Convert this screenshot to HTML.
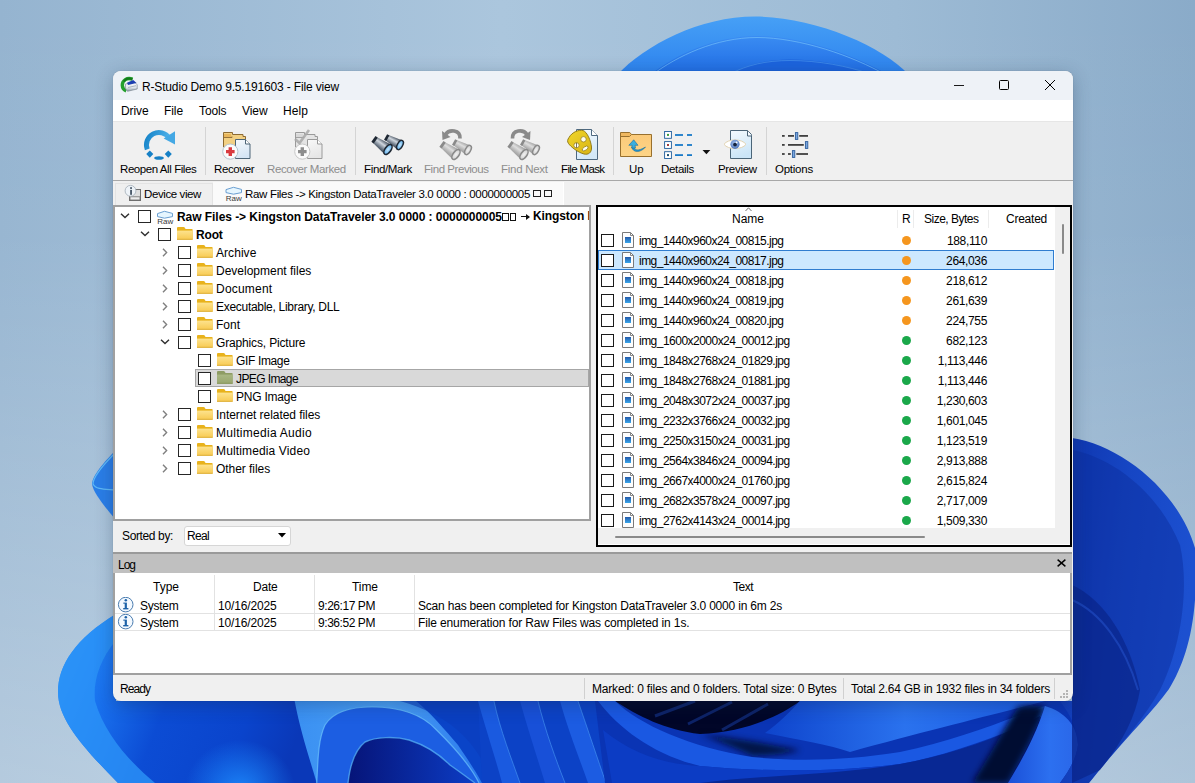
<!DOCTYPE html>
<html><head><meta charset="utf-8"><style>
html,body{margin:0;padding:0;width:1195px;height:783px;overflow:hidden;}
body{position:relative;font-family:'Liberation Sans', sans-serif;}
div{font-family:'Liberation Sans', sans-serif;}
</style></head><body>
<svg style="position:absolute;left:0;top:0" width="1195" height="783" viewBox="0 0 1195 783">
<defs>
<linearGradient id="sky" x1="0" y1="0" x2="1" y2="0">
<stop offset="0" stop-color="#95b4d0"/><stop offset="0.42" stop-color="#abc6dd"/><stop offset="0.75" stop-color="#9dbbd5"/><stop offset="1" stop-color="#8aabc9"/>
</linearGradient>
<linearGradient id="skyv" x1="0" y1="0" x2="0" y2="1">
<stop offset="0" stop-color="#ffffff" stop-opacity="0"/><stop offset="0.3" stop-color="#ffffff" stop-opacity="0.03"/><stop offset="1" stop-color="#ffffff" stop-opacity="0.3"/>
</linearGradient>
<linearGradient id="arc1" x1="0" y1="0" x2="0" y2="1"><stop offset="0" stop-color="#46a0f6"/><stop offset="1" stop-color="#2d82ee"/></linearGradient>
<linearGradient id="arc2" x1="0" y1="0" x2="0" y2="1"><stop offset="0" stop-color="#3a8cf2"/><stop offset="1" stop-color="#1f6ce4"/></linearGradient>
<linearGradient id="lp" x1="0" y1="0" x2="1" y2="0.25">
<stop offset="0" stop-color="#2e9af8"/><stop offset="0.25" stop-color="#1a74f0"/><stop offset="0.5" stop-color="#0c4cd4"/><stop offset="0.8" stop-color="#0a44cc"/><stop offset="1" stop-color="#0a38b8"/>
</linearGradient>
<linearGradient id="rp" x1="0" y1="0" x2="1" y2="0.3"><stop offset="0" stop-color="#0e34ac"/><stop offset="0.5" stop-color="#1646c4"/><stop offset="1" stop-color="#1c50d0"/></linearGradient>
<linearGradient id="rib" x1="0" y1="0" x2="1" y2="0"><stop offset="0" stop-color="#3a90f2"/><stop offset="0.5" stop-color="#4aa0f6"/><stop offset="1" stop-color="#2a78ec"/></linearGradient><linearGradient id="inn" x1="0" y1="0" x2="1" y2="0"><stop offset="0" stop-color="#061478"/><stop offset="1" stop-color="#0c3cc4"/></linearGradient>
<linearGradient id="sw" x1="0" y1="0" x2="0" y2="1"><stop offset="0" stop-color="#0a2aa0"/><stop offset="1" stop-color="#1c64ee"/></linearGradient>
<linearGradient id="dkv" x1="0" y1="0" x2="0" y2="1"><stop offset="0" stop-color="#000618"/><stop offset="1" stop-color="#0a2a9a"/></linearGradient>
<linearGradient id="rb2" x1="0" y1="0" x2="1" y2="0"><stop offset="0" stop-color="#1a5ae6"/><stop offset="1" stop-color="#2a76f2"/></linearGradient>
<linearGradient id="ms" x1="0" y1="0" x2="1" y2="0"><stop offset="0" stop-color="#0e44cc"/><stop offset="0.5" stop-color="#2a72ee"/><stop offset="1" stop-color="#1a5ae2"/></linearGradient><linearGradient id="tg" x1="0" y1="0" x2="1" y2="0"><stop offset="0" stop-color="#1a50d8"/><stop offset="0.6" stop-color="#2c70f0"/><stop offset="1" stop-color="#2a66e8"/></linearGradient><filter id="b3" x="-30%" y="-30%" width="160%" height="160%"><feGaussianBlur stdDeviation="3"/></filter>
<radialGradient id="spot" cx="0.5" cy="0.5" r="0.5"><stop offset="0" stop-color="#1c86fa" stop-opacity="0.95"/><stop offset="1" stop-color="#1c86fa" stop-opacity="0"/></radialGradient>
</defs>
<rect width="1195" height="783" fill="url(#sky)"/>
<rect width="1195" height="783" fill="url(#skyv)"/>
<!-- top arc -->
<path d="M617 75 C645 45 700 16.5 755 16.5 C812 16.5 882 45 909 75 Z" fill="url(#arc1)"/>
<path d="M650 75 C675 55 715 36 757 36 C800 36 855 55 888 75 Z" fill="url(#arc2)"/>
<path d="M652 75 C677 56 716 37.5 757 37.5 C800 37.5 853 56 886 75" fill="none" stroke="#7cc8fc" stroke-width="1" opacity="0.6"/>
<path d="M728 75 C745 65 765 59.5 790 59.5 C820 59.5 850 66 872 75 Z" fill="#1c64de"/>
<path d="M730 74 C747 65 766 60.5 790 60.5 C818 60.5 848 66 870 74" fill="none" stroke="#5aa8f4" stroke-width="1" opacity="0.5"/>
<!-- left small petal -->
<path d="M116 450 C104 462 92 476 92 484 C93 492 104 506 116 520 Z" fill="#2a7ee8"/>
<path d="M116 452 C104 464 93 476 93 484 C96 490 106 489 116 490" fill="none" stroke="#6cc8fa" stroke-width="1.2" opacity="0.8"/>
<!-- left big petal + bottom-left body -->
<path d="M116 614 C76 638 58 665 58 692 C58 722 88 752 118 783 L330 783 L295 701 L116 701 Z" fill="url(#lp)"/>
<path d="M116 640 C100 660 93 680 95 701 C105 735 130 762 155 783 L118 783 C88 752 58 722 58 692 C58 665 76 638 116 614 Z" fill="#2c94f8" opacity="0.8"/>
<ellipse cx="240" cy="790" rx="55" ry="50" fill="url(#spot)"/>
<!-- loop ribbons region -->
<path d="M294 701 L480 701 L485 783 L316 783 Z" fill="#0a44c8"/>
<path d="M294.7 701 L416 701 C430 712 445 730 458 745 C468 760 475 770 482 783 L316.8 783 C310 760 300 730 294.7 701 Z" fill="url(#rib)"/>
<path d="M316.8 783 C318 760 318 740 325 725 C333 712 350 707 372 707 C395 707 420 712 436.5 730 C455 748 470 765 479 783 Z" fill="#1c5ee2"/>
<path d="M316.8 783 C318 760 318 740 325 725 C333 712 350 707 372 707 C395 707 420 712 436.5 730 C455 748 470 765 479 783" fill="none" stroke="#7ad4ff" stroke-width="1.2" opacity="0.6"/>
<path d="M348 783 C350 765 355 750 365 742 C375 737 395 736 409 740 C425 745 440 755 450 765 C460 772 468 778 475 783 Z" fill="url(#inn)"/>
<path d="M348 783 C350 765 355 750 365 742 C375 737 395 736 409 740 C425 745 440 755 450 765 C460 772 468 778 475 783" fill="none" stroke="#5ab8f8" stroke-width="1.4" opacity="0.7"/>
<path d="M400 701 L480 701 L482 760 C470 740 450 715 400 701 Z" fill="#0a3cbc" opacity="0.6"/>
<!-- vertical ribbons -->
<path d="M478 701 L600 701 L610 783 L482 783 Z" fill="#0c42c6"/>
<path d="M478 701 C486 730 496 760 502 783 L520 783 C512 760 500 730 494 701 Z" fill="#1a5ae0"/>
<path d="M520 701 C528 730 538 760 545 783 L565 783 C556 760 545 730 538 701 Z" fill="#1850d8"/>
<path d="M560 701 C568 730 580 760 588 783 L606 783 C598 760 588 730 578 701 Z" fill="#1c5ce2"/>
<path d="M494 701 C500 730 512 760 520 783 M538 701 C545 730 556 760 565 783 M578 701 C588 730 598 760 606 783" fill="none" stroke="#4a9af4" stroke-width="1" opacity="0.6"/>
<!-- sweeping region -->
<path d="M595 701 L1080 701 L1080 783 L605 783 Z" fill="#0a34b4"/>
<path d="M615 701 L800 701 C780 716 745 732 700 734 C665 730 638 716 615 701 Z" fill="#010628"/>
<path d="M655 716 L695 701 M688 724 L732 702 M722 730 L768 704" stroke="#1a40a8" stroke-width="3" opacity="0.5"/>
<path d="M800 701 L1045 701 C1000 713 930 730 850 752 C830 745 800 740 765 733 C780 722 790 712 800 701 Z" fill="url(#ms)"/>
<path d="M700 734 C735 738 770 744 800 750 C790 754 770 756 752 756 C735 748 715 740 700 734 Z" fill="#02082a" opacity="0.8" filter="url(#b3)"/>
<path d="M598 701 L615 701 C640 725 690 747 752 757 C800 762 850 760 900 752 C960 740 1010 718 1045 706 L1050 713 C1010 732 950 755 900 764 C840 772 760 772 700 766 C655 755 620 730 598 701 Z" fill="#1a58e2"/>
<path d="M603 730 C630 752 660 764 700 766 C760 772 840 772 900 764 L900 783 L612 783 Z" fill="#0c3cc4"/>
<path d="M700 783 C760 775 840 775 900 764 C950 755 1000 738 1040 716 L1030 783 Z" fill="#082894"/>
<path d="M1018 707 C1026 705 1035 705 1045 706 C1035 735 1020 760 1008 783 L972 783 C990 755 1003 730 1018 707 Z" fill="#020a30" filter="url(#b3)"/>
<path d="M1045 706 C1065 712 1077 725 1078 745 C1076 760 1068 772 1060 783 L1008 783 C1022 760 1036 735 1045 706 Z" fill="url(#tg)"/>
<!-- right petal -->
<path d="M1072 438 C1120 445 1178 490 1195 548 L1195 600 C1192 640 1182 668 1169 689 C1150 715 1125 738 1089 783 L1060 783 C1068 772 1076 760 1078 745 C1077 725 1068 712 1060 701 L1072 701 Z" fill="url(#rp)"/>
<path d="M1072 450 C1115 458 1160 495 1180 545 C1190 590 1180 650 1160 690 C1140 725 1115 750 1089 783 L1072 783 Z" fill="#0c2c9c" opacity="0.45"/>
<path d="M1072 585 C1105 600 1130 640 1140 690 C1135 720 1120 745 1100 770 L1072 783 Z" fill="#081f80" opacity="0.55"/>
<path d="M1072 600 C1100 612 1125 645 1138 690" fill="none" stroke="#2a5ad8" stroke-width="2" opacity="0.45"/>
</svg><div style="position:absolute;left:113px;top:71px;width:960px;height:630px;border-radius:8px;box-shadow:0 4px 18px rgba(20,40,70,0.30)"></div><div style="position:absolute;left:113px;top:71px;width:960px;height:630px;background:#f0f0f0;border-radius:8px;overflow:hidden;box-shadow:0 0 1px rgba(0,0,0,0.3)"></div><div style="position:absolute;left:113px;top:71px;width:960px;height:29px;background:#eef2f7;border-radius:8px 8px 0 0"></div><div style="position:absolute;left:113px;top:100px;width:960px;height:22px;background:#ffffff"></div><div style="position:absolute;left:113px;top:121px;width:960px;height:1px;background:#e6e6e6"></div><div style="position:absolute;left:113px;top:180px;width:960px;height:1px;background:#a8a8a8"></div><div style="position:absolute;left:115px;top:183px;width:98px;height:22px;background:#efefef;border:1px solid #e3e3e3;border-bottom:0;box-sizing:border-box"></div><div style="position:absolute;left:213px;top:182px;width:351px;height:23px;background:#fafafa"></div><div style="position:absolute;left:563px;top:182px;width:1px;height:23px;background:#ffffff"></div><div style="position:absolute;left:113px;top:205px;width:478px;height:316px;background:#ffffff;border:2px solid #a0a0a0;box-sizing:border-box"></div><div style="position:absolute;left:596px;top:205px;width:476px;height:342px;background:#ffffff;border:2px solid #000;box-sizing:border-box"></div><div style="position:absolute;left:113px;top:552px;width:959px;height:2px;background:#9a9a9a"></div><div style="position:absolute;left:113px;top:554px;width:959px;height:19px;background:#c0c0c0"></div><div style="position:absolute;left:113px;top:573px;width:959px;height:102px;background:#ffffff;border:2px solid #a0a0a0;border-top:0;box-sizing:border-box"></div><div style="position:absolute;top:81px;font-size:12px;line-height:12px;color:#000;white-space:nowrap;letter-spacing:-0.160px;left:142px;">R-Studio Demo 9.5.191603 - File view</div><div style="position:absolute;left:954px;top:85px;width:10px;height:1px;background:#1a1a1a"></div><svg style="position:absolute;left:998px;top:79px;" width="12" height="12" viewBox="0 0 12 12"><rect x="1.5" y="1.5" width="9" height="9" rx="1" fill="none" stroke="#000" stroke-width="1"/></svg><svg style="position:absolute;left:1044px;top:79px;" width="12" height="12" viewBox="0 0 12 12"><path d="M1 1 L11 11 M11 1 L1 11" stroke="#000" stroke-width="1"/></svg><div style="position:absolute;top:105px;font-size:12px;line-height:12px;color:#000;white-space:nowrap;letter-spacing:-0.083px;left:121px;">Drive</div><div style="position:absolute;top:105px;font-size:12px;line-height:12px;color:#000;white-space:nowrap;letter-spacing:-0.061px;left:164px;">File</div><div style="position:absolute;top:105px;font-size:12px;line-height:12px;color:#000;white-space:nowrap;letter-spacing:-0.123px;left:199px;">Tools</div><div style="position:absolute;top:105px;font-size:12px;line-height:12px;color:#000;white-space:nowrap;letter-spacing:-0.049px;left:242px;">View</div><div style="position:absolute;top:105px;font-size:12px;line-height:12px;color:#000;white-space:nowrap;letter-spacing:0.103px;left:283px;">Help</div><div style="position:absolute;top:164px;font-size:11.5px;line-height:11.5px;color:#000;white-space:nowrap;letter-spacing:-0.426px;left:120px;">Reopen All Files</div><div style="position:absolute;top:164px;font-size:11.5px;line-height:11.5px;color:#000;white-space:nowrap;letter-spacing:-0.390px;left:214px;">Recover</div><div style="position:absolute;top:164px;font-size:11.5px;line-height:11.5px;color:#8d8d8d;white-space:nowrap;letter-spacing:-0.398px;left:267px;">Recover Marked</div><div style="position:absolute;top:164px;font-size:11.5px;line-height:11.5px;color:#000;white-space:nowrap;letter-spacing:-0.347px;left:364px;">Find/Mark</div><div style="position:absolute;top:164px;font-size:11.5px;line-height:11.5px;color:#8d8d8d;white-space:nowrap;letter-spacing:-0.447px;left:424px;">Find Previous</div><div style="position:absolute;top:164px;font-size:11.5px;line-height:11.5px;color:#8d8d8d;white-space:nowrap;letter-spacing:-0.280px;left:501px;">Find Next</div><div style="position:absolute;top:164px;font-size:11.5px;line-height:11.5px;color:#000;white-space:nowrap;letter-spacing:-0.645px;left:561px;">File Mask</div><div style="position:absolute;top:164px;font-size:11.5px;line-height:11.5px;color:#000;white-space:nowrap;letter-spacing:0.048px;left:629px;">Up</div><div style="position:absolute;top:164px;font-size:11.5px;line-height:11.5px;color:#000;white-space:nowrap;letter-spacing:-0.337px;left:661px;">Details</div><div style="position:absolute;top:164px;font-size:11.5px;line-height:11.5px;color:#000;white-space:nowrap;letter-spacing:-0.315px;left:718px;">Preview</div><div style="position:absolute;top:164px;font-size:11.5px;line-height:11.5px;color:#000;white-space:nowrap;letter-spacing:-0.249px;left:775px;">Options</div><div style="position:absolute;left:205px;top:127px;width:1px;height:48px;background:#d4d4d4"></div><div style="position:absolute;left:355px;top:127px;width:1px;height:48px;background:#d4d4d4"></div><div style="position:absolute;left:613px;top:127px;width:1px;height:48px;background:#d4d4d4"></div><div style="position:absolute;left:766px;top:127px;width:1px;height:48px;background:#d4d4d4"></div><div style="position:absolute;top:189px;font-size:11.5px;line-height:11.5px;color:#000;white-space:nowrap;letter-spacing:-0.396px;left:144px;">Device view</div><div style="position:absolute;top:189px;font-size:11.5px;line-height:11.5px;color:#000;white-space:nowrap;letter-spacing:-0.320px;left:245px;">Raw Files -&gt; Kingston DataTraveler 3.0 0000 : 0000000005</div><div style="position:absolute;left:533px;top:190px;width:8px;height:7px;border:1px solid #222;box-sizing:border-box"></div><div style="position:absolute;left:544px;top:190px;width:8px;height:7px;border:1px solid #222;box-sizing:border-box"></div><svg style="position:absolute;left:120px;top:213px;" width="10" height="6" viewBox="0 0 10 6"><path d="M1 0.8 L5 4.6 L9 0.8" fill="none" stroke="#303030" stroke-width="1.4"/></svg><div style="position:absolute;left:138px;top:210px;width:13px;height:13px;border:1px solid #262626;box-sizing:border-box;background:#fff"></div><svg style="position:absolute;left:156px;top:210px;" width="18" height="16" viewBox="0 0 18 16"><path d="M1.5 3.6 L8.5 1.3 L16.5 3.4 L16.5 6.6 L8.5 8.2 L1.5 6.6 Z" fill="#e6f6ff" stroke="#6a9fd2" stroke-width="1"/><text x="1.3" y="14.3" font-family="Liberation Sans" font-size="8" fill="#383838">Raw</text></svg><div style="position:absolute;top:211px;font-size:12px;line-height:12px;color:#000;white-space:nowrap;letter-spacing:-0.051px;font-weight:bold;left:177px;">Raw Files -&gt; Kingston DataTraveler 3.0 0000 : 0000000005</div><div style="position:absolute;left:502px;top:213px;width:7px;height:8px;border:1px solid #111;box-sizing:border-box"></div><div style="position:absolute;left:510px;top:213px;width:6px;height:8px;border:1px solid #111;box-sizing:border-box"></div><div style="position:absolute;left:521px;top:216px;width:8px;height:1.4px;background:#111"></div><svg style="position:absolute;left:526px;top:214px;" width="5" height="6" viewBox="0 0 5 6"><path d="M0 0 L4 3 L0 6 Z" fill="#111"/></svg><div style="position:absolute;left:533px;top:207px;width:56px;height:18px;overflow:hidden"><div style="position:absolute;left:0;top:3px;font-size:12px;line-height:12px;font-weight:bold;white-space:nowrap;letter-spacing:-0.1px">Kingston DataTraveler</div></div><svg style="position:absolute;left:140px;top:231px;" width="10" height="6" viewBox="0 0 10 6"><path d="M1 0.8 L5 4.6 L9 0.8" fill="none" stroke="#303030" stroke-width="1.4"/></svg><div style="position:absolute;left:158px;top:228px;width:13px;height:13px;border:1px solid #262626;box-sizing:border-box;background:#fff"></div><svg style="position:absolute;left:177px;top:227px;" width="16" height="13" viewBox="0 0 16 13"><defs><linearGradient id="fd1" x1="0" y1="0" x2="0" y2="1"><stop offset="0" stop-color="#fde38e"/><stop offset="1" stop-color="#f8ca52"/></linearGradient></defs><path d="M0 1 Q0 0 1 0 L6.5 0 Q7.5 0 8 1 L8.5 2 L15 2 Q15.6 2 15.6 2.8 L15.6 12.6 L0 12.6 Z" fill="#e8b21c"/><path d="M0 3.6 L15.6 3.6 L15.6 12.6 L0 12.6 Z" fill="url(#fd1)"/><rect x="0" y="11.8" width="15.6" height="0.9" fill="#dcae3c"/></svg><div style="position:absolute;top:229px;font-size:12px;line-height:12px;color:#000;white-space:nowrap;letter-spacing:-0.157px;font-weight:bold;left:196px;">Root</div><svg style="position:absolute;left:162px;top:248px;" width="6" height="9" viewBox="0 0 6 9"><path d="M1 0.8 L4.6 4.5 L1 8.2" fill="none" stroke="#808080" stroke-width="1.4"/></svg><div style="position:absolute;left:178px;top:246px;width:13px;height:13px;border:1px solid #262626;box-sizing:border-box;background:#fff"></div><svg style="position:absolute;left:197px;top:245px;" width="16" height="13" viewBox="0 0 16 13"><defs><linearGradient id="fd2" x1="0" y1="0" x2="0" y2="1"><stop offset="0" stop-color="#fde38e"/><stop offset="1" stop-color="#f8ca52"/></linearGradient></defs><path d="M0 1 Q0 0 1 0 L6.5 0 Q7.5 0 8 1 L8.5 2 L15 2 Q15.6 2 15.6 2.8 L15.6 12.6 L0 12.6 Z" fill="#e8b21c"/><path d="M0 3.6 L15.6 3.6 L15.6 12.6 L0 12.6 Z" fill="url(#fd2)"/><rect x="0" y="11.8" width="15.6" height="0.9" fill="#dcae3c"/></svg><div style="position:absolute;top:247px;font-size:12px;line-height:12px;color:#000;white-space:nowrap;letter-spacing:0.055px;left:216px;">Archive</div><svg style="position:absolute;left:162px;top:266px;" width="6" height="9" viewBox="0 0 6 9"><path d="M1 0.8 L4.6 4.5 L1 8.2" fill="none" stroke="#808080" stroke-width="1.4"/></svg><div style="position:absolute;left:178px;top:264px;width:13px;height:13px;border:1px solid #262626;box-sizing:border-box;background:#fff"></div><svg style="position:absolute;left:197px;top:263px;" width="16" height="13" viewBox="0 0 16 13"><defs><linearGradient id="fd3" x1="0" y1="0" x2="0" y2="1"><stop offset="0" stop-color="#fde38e"/><stop offset="1" stop-color="#f8ca52"/></linearGradient></defs><path d="M0 1 Q0 0 1 0 L6.5 0 Q7.5 0 8 1 L8.5 2 L15 2 Q15.6 2 15.6 2.8 L15.6 12.6 L0 12.6 Z" fill="#e8b21c"/><path d="M0 3.6 L15.6 3.6 L15.6 12.6 L0 12.6 Z" fill="url(#fd3)"/><rect x="0" y="11.8" width="15.6" height="0.9" fill="#dcae3c"/></svg><div style="position:absolute;top:265px;font-size:12px;line-height:12px;color:#000;white-space:nowrap;letter-spacing:-0.005px;left:216px;">Development files</div><svg style="position:absolute;left:162px;top:284px;" width="6" height="9" viewBox="0 0 6 9"><path d="M1 0.8 L4.6 4.5 L1 8.2" fill="none" stroke="#808080" stroke-width="1.4"/></svg><div style="position:absolute;left:178px;top:282px;width:13px;height:13px;border:1px solid #262626;box-sizing:border-box;background:#fff"></div><svg style="position:absolute;left:197px;top:281px;" width="16" height="13" viewBox="0 0 16 13"><defs><linearGradient id="fd4" x1="0" y1="0" x2="0" y2="1"><stop offset="0" stop-color="#fde38e"/><stop offset="1" stop-color="#f8ca52"/></linearGradient></defs><path d="M0 1 Q0 0 1 0 L6.5 0 Q7.5 0 8 1 L8.5 2 L15 2 Q15.6 2 15.6 2.8 L15.6 12.6 L0 12.6 Z" fill="#e8b21c"/><path d="M0 3.6 L15.6 3.6 L15.6 12.6 L0 12.6 Z" fill="url(#fd4)"/><rect x="0" y="11.8" width="15.6" height="0.9" fill="#dcae3c"/></svg><div style="position:absolute;top:283px;font-size:12px;line-height:12px;color:#000;white-space:nowrap;letter-spacing:0.212px;left:216px;">Document</div><svg style="position:absolute;left:162px;top:302px;" width="6" height="9" viewBox="0 0 6 9"><path d="M1 0.8 L4.6 4.5 L1 8.2" fill="none" stroke="#808080" stroke-width="1.4"/></svg><div style="position:absolute;left:178px;top:300px;width:13px;height:13px;border:1px solid #262626;box-sizing:border-box;background:#fff"></div><svg style="position:absolute;left:197px;top:299px;" width="16" height="13" viewBox="0 0 16 13"><defs><linearGradient id="fd5" x1="0" y1="0" x2="0" y2="1"><stop offset="0" stop-color="#fde38e"/><stop offset="1" stop-color="#f8ca52"/></linearGradient></defs><path d="M0 1 Q0 0 1 0 L6.5 0 Q7.5 0 8 1 L8.5 2 L15 2 Q15.6 2 15.6 2.8 L15.6 12.6 L0 12.6 Z" fill="#e8b21c"/><path d="M0 3.6 L15.6 3.6 L15.6 12.6 L0 12.6 Z" fill="url(#fd5)"/><rect x="0" y="11.8" width="15.6" height="0.9" fill="#dcae3c"/></svg><div style="position:absolute;top:301px;font-size:12px;line-height:12px;color:#000;white-space:nowrap;letter-spacing:-0.292px;left:216px;">Executable, Library, DLL</div><svg style="position:absolute;left:162px;top:320px;" width="6" height="9" viewBox="0 0 6 9"><path d="M1 0.8 L4.6 4.5 L1 8.2" fill="none" stroke="#808080" stroke-width="1.4"/></svg><div style="position:absolute;left:178px;top:318px;width:13px;height:13px;border:1px solid #262626;box-sizing:border-box;background:#fff"></div><svg style="position:absolute;left:197px;top:317px;" width="16" height="13" viewBox="0 0 16 13"><defs><linearGradient id="fd6" x1="0" y1="0" x2="0" y2="1"><stop offset="0" stop-color="#fde38e"/><stop offset="1" stop-color="#f8ca52"/></linearGradient></defs><path d="M0 1 Q0 0 1 0 L6.5 0 Q7.5 0 8 1 L8.5 2 L15 2 Q15.6 2 15.6 2.8 L15.6 12.6 L0 12.6 Z" fill="#e8b21c"/><path d="M0 3.6 L15.6 3.6 L15.6 12.6 L0 12.6 Z" fill="url(#fd6)"/><rect x="0" y="11.8" width="15.6" height="0.9" fill="#dcae3c"/></svg><div style="position:absolute;top:319px;font-size:12px;line-height:12px;color:#000;white-space:nowrap;letter-spacing:0.021px;left:216px;">Font</div><svg style="position:absolute;left:160px;top:339px;" width="10" height="6" viewBox="0 0 10 6"><path d="M1 0.8 L5 4.6 L9 0.8" fill="none" stroke="#303030" stroke-width="1.4"/></svg><div style="position:absolute;left:178px;top:336px;width:13px;height:13px;border:1px solid #262626;box-sizing:border-box;background:#fff"></div><svg style="position:absolute;left:197px;top:335px;" width="16" height="13" viewBox="0 0 16 13"><defs><linearGradient id="fd7" x1="0" y1="0" x2="0" y2="1"><stop offset="0" stop-color="#fde38e"/><stop offset="1" stop-color="#f8ca52"/></linearGradient></defs><path d="M0 1 Q0 0 1 0 L6.5 0 Q7.5 0 8 1 L8.5 2 L15 2 Q15.6 2 15.6 2.8 L15.6 12.6 L0 12.6 Z" fill="#e8b21c"/><path d="M0 3.6 L15.6 3.6 L15.6 12.6 L0 12.6 Z" fill="url(#fd7)"/><rect x="0" y="11.8" width="15.6" height="0.9" fill="#dcae3c"/></svg><div style="position:absolute;top:337px;font-size:12px;line-height:12px;color:#000;white-space:nowrap;letter-spacing:-0.156px;left:216px;">Graphics, Picture</div><div style="position:absolute;left:198px;top:354px;width:13px;height:13px;border:1px solid #262626;box-sizing:border-box;background:#fff"></div><svg style="position:absolute;left:217px;top:353px;" width="16" height="13" viewBox="0 0 16 13"><defs><linearGradient id="fd8" x1="0" y1="0" x2="0" y2="1"><stop offset="0" stop-color="#fde38e"/><stop offset="1" stop-color="#f8ca52"/></linearGradient></defs><path d="M0 1 Q0 0 1 0 L6.5 0 Q7.5 0 8 1 L8.5 2 L15 2 Q15.6 2 15.6 2.8 L15.6 12.6 L0 12.6 Z" fill="#e8b21c"/><path d="M0 3.6 L15.6 3.6 L15.6 12.6 L0 12.6 Z" fill="url(#fd8)"/><rect x="0" y="11.8" width="15.6" height="0.9" fill="#dcae3c"/></svg><div style="position:absolute;top:355px;font-size:12px;line-height:12px;color:#000;white-space:nowrap;letter-spacing:-0.354px;left:236px;">GIF Image</div><div style="position:absolute;left:195px;top:369px;width:394px;height:18px;background:#d9d9d9;border:1px solid #a6a6a6;box-sizing:border-box"></div><div style="position:absolute;left:198px;top:372px;width:13px;height:13px;border:1px solid #262626;box-sizing:border-box;background:#fff"></div><svg style="position:absolute;left:217px;top:371px;" width="16" height="13" viewBox="0 0 16 13"><defs><linearGradient id="fd9" x1="0" y1="0" x2="0" y2="1"><stop offset="0" stop-color="#a9b783"/><stop offset="1" stop-color="#98a66e"/></linearGradient></defs><path d="M0 1 Q0 0 1 0 L6.5 0 Q7.5 0 8 1 L8.5 2 L15 2 Q15.6 2 15.6 2.8 L15.6 12.6 L0 12.6 Z" fill="#8e9c64"/><path d="M0 3.6 L15.6 3.6 L15.6 12.6 L0 12.6 Z" fill="url(#fd9)"/><rect x="0" y="11.8" width="15.6" height="0.9" fill="#86945c"/></svg><div style="position:absolute;top:373px;font-size:12px;line-height:12px;color:#000;white-space:nowrap;letter-spacing:-0.603px;left:236px;">JPEG Image</div><div style="position:absolute;left:198px;top:390px;width:13px;height:13px;border:1px solid #262626;box-sizing:border-box;background:#fff"></div><svg style="position:absolute;left:217px;top:389px;" width="16" height="13" viewBox="0 0 16 13"><defs><linearGradient id="fd10" x1="0" y1="0" x2="0" y2="1"><stop offset="0" stop-color="#fde38e"/><stop offset="1" stop-color="#f8ca52"/></linearGradient></defs><path d="M0 1 Q0 0 1 0 L6.5 0 Q7.5 0 8 1 L8.5 2 L15 2 Q15.6 2 15.6 2.8 L15.6 12.6 L0 12.6 Z" fill="#e8b21c"/><path d="M0 3.6 L15.6 3.6 L15.6 12.6 L0 12.6 Z" fill="url(#fd10)"/><rect x="0" y="11.8" width="15.6" height="0.9" fill="#dcae3c"/></svg><div style="position:absolute;top:391px;font-size:12px;line-height:12px;color:#000;white-space:nowrap;letter-spacing:-0.234px;left:236px;">PNG Image</div><svg style="position:absolute;left:162px;top:410px;" width="6" height="9" viewBox="0 0 6 9"><path d="M1 0.8 L4.6 4.5 L1 8.2" fill="none" stroke="#808080" stroke-width="1.4"/></svg><div style="position:absolute;left:178px;top:408px;width:13px;height:13px;border:1px solid #262626;box-sizing:border-box;background:#fff"></div><svg style="position:absolute;left:197px;top:407px;" width="16" height="13" viewBox="0 0 16 13"><defs><linearGradient id="fd11" x1="0" y1="0" x2="0" y2="1"><stop offset="0" stop-color="#fde38e"/><stop offset="1" stop-color="#f8ca52"/></linearGradient></defs><path d="M0 1 Q0 0 1 0 L6.5 0 Q7.5 0 8 1 L8.5 2 L15 2 Q15.6 2 15.6 2.8 L15.6 12.6 L0 12.6 Z" fill="#e8b21c"/><path d="M0 3.6 L15.6 3.6 L15.6 12.6 L0 12.6 Z" fill="url(#fd11)"/><rect x="0" y="11.8" width="15.6" height="0.9" fill="#dcae3c"/></svg><div style="position:absolute;top:409px;font-size:12px;line-height:12px;color:#000;white-space:nowrap;letter-spacing:-0.050px;left:216px;">Internet related files</div><svg style="position:absolute;left:162px;top:428px;" width="6" height="9" viewBox="0 0 6 9"><path d="M1 0.8 L4.6 4.5 L1 8.2" fill="none" stroke="#808080" stroke-width="1.4"/></svg><div style="position:absolute;left:178px;top:426px;width:13px;height:13px;border:1px solid #262626;box-sizing:border-box;background:#fff"></div><svg style="position:absolute;left:197px;top:425px;" width="16" height="13" viewBox="0 0 16 13"><defs><linearGradient id="fd12" x1="0" y1="0" x2="0" y2="1"><stop offset="0" stop-color="#fde38e"/><stop offset="1" stop-color="#f8ca52"/></linearGradient></defs><path d="M0 1 Q0 0 1 0 L6.5 0 Q7.5 0 8 1 L8.5 2 L15 2 Q15.6 2 15.6 2.8 L15.6 12.6 L0 12.6 Z" fill="#e8b21c"/><path d="M0 3.6 L15.6 3.6 L15.6 12.6 L0 12.6 Z" fill="url(#fd12)"/><rect x="0" y="11.8" width="15.6" height="0.9" fill="#dcae3c"/></svg><div style="position:absolute;top:427px;font-size:12px;line-height:12px;color:#000;white-space:nowrap;letter-spacing:0.282px;left:216px;">Multimedia Audio</div><svg style="position:absolute;left:162px;top:446px;" width="6" height="9" viewBox="0 0 6 9"><path d="M1 0.8 L4.6 4.5 L1 8.2" fill="none" stroke="#808080" stroke-width="1.4"/></svg><div style="position:absolute;left:178px;top:444px;width:13px;height:13px;border:1px solid #262626;box-sizing:border-box;background:#fff"></div><svg style="position:absolute;left:197px;top:443px;" width="16" height="13" viewBox="0 0 16 13"><defs><linearGradient id="fd13" x1="0" y1="0" x2="0" y2="1"><stop offset="0" stop-color="#fde38e"/><stop offset="1" stop-color="#f8ca52"/></linearGradient></defs><path d="M0 1 Q0 0 1 0 L6.5 0 Q7.5 0 8 1 L8.5 2 L15 2 Q15.6 2 15.6 2.8 L15.6 12.6 L0 12.6 Z" fill="#e8b21c"/><path d="M0 3.6 L15.6 3.6 L15.6 12.6 L0 12.6 Z" fill="url(#fd13)"/><rect x="0" y="11.8" width="15.6" height="0.9" fill="#dcae3c"/></svg><div style="position:absolute;top:445px;font-size:12px;line-height:12px;color:#000;white-space:nowrap;letter-spacing:0.136px;left:216px;">Multimedia Video</div><svg style="position:absolute;left:162px;top:464px;" width="6" height="9" viewBox="0 0 6 9"><path d="M1 0.8 L4.6 4.5 L1 8.2" fill="none" stroke="#808080" stroke-width="1.4"/></svg><div style="position:absolute;left:178px;top:462px;width:13px;height:13px;border:1px solid #262626;box-sizing:border-box;background:#fff"></div><svg style="position:absolute;left:197px;top:461px;" width="16" height="13" viewBox="0 0 16 13"><defs><linearGradient id="fd14" x1="0" y1="0" x2="0" y2="1"><stop offset="0" stop-color="#fde38e"/><stop offset="1" stop-color="#f8ca52"/></linearGradient></defs><path d="M0 1 Q0 0 1 0 L6.5 0 Q7.5 0 8 1 L8.5 2 L15 2 Q15.6 2 15.6 2.8 L15.6 12.6 L0 12.6 Z" fill="#e8b21c"/><path d="M0 3.6 L15.6 3.6 L15.6 12.6 L0 12.6 Z" fill="url(#fd14)"/><rect x="0" y="11.8" width="15.6" height="0.9" fill="#dcae3c"/></svg><div style="position:absolute;top:463px;font-size:12px;line-height:12px;color:#000;white-space:nowrap;letter-spacing:-0.053px;left:216px;">Other files</div><div style="position:absolute;top:213px;font-size:12px;line-height:12px;color:#000;white-space:nowrap;letter-spacing:-0.004px;left:732px;">Name</div><div style="position:absolute;top:213px;font-size:12px;line-height:12px;color:#000;white-space:nowrap;left:902px;">R</div><div style="position:absolute;top:213px;font-size:12px;line-height:12px;color:#000;white-space:nowrap;letter-spacing:-0.503px;left:924px;">Size, Bytes</div><div style="position:absolute;top:213px;font-size:12px;line-height:12px;color:#000;white-space:nowrap;letter-spacing:-0.243px;left:1006px;">Created</div><div style="position:absolute;left:897px;top:210px;width:1px;height:18px;background:#ececec"></div><div style="position:absolute;left:913px;top:210px;width:1px;height:18px;background:#ececec"></div><div style="position:absolute;left:988px;top:210px;width:1px;height:18px;background:#ececec"></div><svg style="position:absolute;left:745px;top:207px;" width="8" height="5" viewBox="0 0 8 5"><path d="M0.5 4 L3.5 0.8 L6.5 4" fill="none" stroke="#606060" stroke-width="0.9"/></svg><div style="position:absolute;left:1055px;top:207px;width:15px;height:337px;background:#f0f0f0"></div><div style="position:absolute;left:1062px;top:224px;width:2px;height:30px;background:#8a8a8a;border-radius:1px"></div><div style="position:absolute;left:598px;top:528px;width:457px;height:16px;background:#f0f0f0"></div><div style="position:absolute;left:615px;top:536px;width:310px;height:2px;background:#8a8a8a;border-radius:1px"></div><div style="position:absolute;left:601px;top:234px;width:13px;height:13px;border:1px solid #1a1a1a;box-sizing:border-box;background:#fff"></div><svg style="position:absolute;left:622px;top:232px;" width="13" height="16" viewBox="0 0 13 16"><defs><linearGradient id="fi0" x1="0" y1="0" x2="0" y2="1"><stop offset="0" stop-color="#2458a8"/><stop offset="1" stop-color="#3aa6ea"/></linearGradient></defs><path d="M0.5 0.5 L8.5 0.5 L11.5 3.5 L11.5 15.5 L0.5 15.5 Z" fill="#fdfdfd" stroke="#7a7a7a" stroke-width="1"/><path d="M8.5 0.5 L8.5 3.5 L11.5 3.5" fill="none" stroke="#7a7a7a" stroke-width="0.9"/><rect x="3" y="5" width="6" height="6" fill="url(#fi0)"/></svg><div style="position:absolute;top:235px;font-size:12px;line-height:12px;color:#000;white-space:nowrap;letter-spacing:-0.520px;left:639px;">img_1440x960x24_00815.jpg</div><div style="position:absolute;left:902px;top:236px;width:9px;height:9px;background:#f5961e;border-radius:50%"></div><div style="position:absolute;top:235px;font-size:12px;line-height:12px;color:#000;white-space:nowrap;letter-spacing:-0.350px;right:208px;">188,110</div><div style="position:absolute;left:598px;top:250px;width:456px;height:20px;background:#cce8ff;border:1px solid #2f7dd0;box-sizing:border-box"></div><div style="position:absolute;left:601px;top:254px;width:13px;height:13px;border:1px solid #1a1a1a;box-sizing:border-box;background:#fff"></div><svg style="position:absolute;left:622px;top:252px;" width="13" height="16" viewBox="0 0 13 16"><defs><linearGradient id="fi1" x1="0" y1="0" x2="0" y2="1"><stop offset="0" stop-color="#2458a8"/><stop offset="1" stop-color="#3aa6ea"/></linearGradient></defs><path d="M0.5 0.5 L8.5 0.5 L11.5 3.5 L11.5 15.5 L0.5 15.5 Z" fill="#fdfdfd" stroke="#7a7a7a" stroke-width="1"/><path d="M8.5 0.5 L8.5 3.5 L11.5 3.5" fill="none" stroke="#7a7a7a" stroke-width="0.9"/><rect x="3" y="5" width="6" height="6" fill="url(#fi1)"/></svg><div style="position:absolute;top:255px;font-size:12px;line-height:12px;color:#000;white-space:nowrap;letter-spacing:-0.520px;left:639px;">img_1440x960x24_00817.jpg</div><div style="position:absolute;left:902px;top:256px;width:9px;height:9px;background:#f5961e;border-radius:50%"></div><div style="position:absolute;top:255px;font-size:12px;line-height:12px;color:#000;white-space:nowrap;letter-spacing:-0.350px;right:208px;">264,036</div><div style="position:absolute;left:601px;top:274px;width:13px;height:13px;border:1px solid #1a1a1a;box-sizing:border-box;background:#fff"></div><svg style="position:absolute;left:622px;top:272px;" width="13" height="16" viewBox="0 0 13 16"><defs><linearGradient id="fi2" x1="0" y1="0" x2="0" y2="1"><stop offset="0" stop-color="#2458a8"/><stop offset="1" stop-color="#3aa6ea"/></linearGradient></defs><path d="M0.5 0.5 L8.5 0.5 L11.5 3.5 L11.5 15.5 L0.5 15.5 Z" fill="#fdfdfd" stroke="#7a7a7a" stroke-width="1"/><path d="M8.5 0.5 L8.5 3.5 L11.5 3.5" fill="none" stroke="#7a7a7a" stroke-width="0.9"/><rect x="3" y="5" width="6" height="6" fill="url(#fi2)"/></svg><div style="position:absolute;top:275px;font-size:12px;line-height:12px;color:#000;white-space:nowrap;letter-spacing:-0.520px;left:639px;">img_1440x960x24_00818.jpg</div><div style="position:absolute;left:902px;top:276px;width:9px;height:9px;background:#f5961e;border-radius:50%"></div><div style="position:absolute;top:275px;font-size:12px;line-height:12px;color:#000;white-space:nowrap;letter-spacing:-0.350px;right:208px;">218,612</div><div style="position:absolute;left:601px;top:294px;width:13px;height:13px;border:1px solid #1a1a1a;box-sizing:border-box;background:#fff"></div><svg style="position:absolute;left:622px;top:292px;" width="13" height="16" viewBox="0 0 13 16"><defs><linearGradient id="fi3" x1="0" y1="0" x2="0" y2="1"><stop offset="0" stop-color="#2458a8"/><stop offset="1" stop-color="#3aa6ea"/></linearGradient></defs><path d="M0.5 0.5 L8.5 0.5 L11.5 3.5 L11.5 15.5 L0.5 15.5 Z" fill="#fdfdfd" stroke="#7a7a7a" stroke-width="1"/><path d="M8.5 0.5 L8.5 3.5 L11.5 3.5" fill="none" stroke="#7a7a7a" stroke-width="0.9"/><rect x="3" y="5" width="6" height="6" fill="url(#fi3)"/></svg><div style="position:absolute;top:295px;font-size:12px;line-height:12px;color:#000;white-space:nowrap;letter-spacing:-0.520px;left:639px;">img_1440x960x24_00819.jpg</div><div style="position:absolute;left:902px;top:296px;width:9px;height:9px;background:#f5961e;border-radius:50%"></div><div style="position:absolute;top:295px;font-size:12px;line-height:12px;color:#000;white-space:nowrap;letter-spacing:-0.350px;right:208px;">261,639</div><div style="position:absolute;left:601px;top:314px;width:13px;height:13px;border:1px solid #1a1a1a;box-sizing:border-box;background:#fff"></div><svg style="position:absolute;left:622px;top:312px;" width="13" height="16" viewBox="0 0 13 16"><defs><linearGradient id="fi4" x1="0" y1="0" x2="0" y2="1"><stop offset="0" stop-color="#2458a8"/><stop offset="1" stop-color="#3aa6ea"/></linearGradient></defs><path d="M0.5 0.5 L8.5 0.5 L11.5 3.5 L11.5 15.5 L0.5 15.5 Z" fill="#fdfdfd" stroke="#7a7a7a" stroke-width="1"/><path d="M8.5 0.5 L8.5 3.5 L11.5 3.5" fill="none" stroke="#7a7a7a" stroke-width="0.9"/><rect x="3" y="5" width="6" height="6" fill="url(#fi4)"/></svg><div style="position:absolute;top:315px;font-size:12px;line-height:12px;color:#000;white-space:nowrap;letter-spacing:-0.520px;left:639px;">img_1440x960x24_00820.jpg</div><div style="position:absolute;left:902px;top:316px;width:9px;height:9px;background:#f5961e;border-radius:50%"></div><div style="position:absolute;top:315px;font-size:12px;line-height:12px;color:#000;white-space:nowrap;letter-spacing:-0.350px;right:208px;">224,755</div><div style="position:absolute;left:601px;top:334px;width:13px;height:13px;border:1px solid #1a1a1a;box-sizing:border-box;background:#fff"></div><svg style="position:absolute;left:622px;top:332px;" width="13" height="16" viewBox="0 0 13 16"><defs><linearGradient id="fi5" x1="0" y1="0" x2="0" y2="1"><stop offset="0" stop-color="#2458a8"/><stop offset="1" stop-color="#3aa6ea"/></linearGradient></defs><path d="M0.5 0.5 L8.5 0.5 L11.5 3.5 L11.5 15.5 L0.5 15.5 Z" fill="#fdfdfd" stroke="#7a7a7a" stroke-width="1"/><path d="M8.5 0.5 L8.5 3.5 L11.5 3.5" fill="none" stroke="#7a7a7a" stroke-width="0.9"/><rect x="3" y="5" width="6" height="6" fill="url(#fi5)"/></svg><div style="position:absolute;top:335px;font-size:12px;line-height:12px;color:#000;white-space:nowrap;letter-spacing:-0.520px;left:639px;">img_1600x2000x24_00012.jpg</div><div style="position:absolute;left:902px;top:336px;width:9px;height:9px;background:#1aa84a;border-radius:50%"></div><div style="position:absolute;top:335px;font-size:12px;line-height:12px;color:#000;white-space:nowrap;letter-spacing:-0.350px;right:208px;">682,123</div><div style="position:absolute;left:601px;top:354px;width:13px;height:13px;border:1px solid #1a1a1a;box-sizing:border-box;background:#fff"></div><svg style="position:absolute;left:622px;top:352px;" width="13" height="16" viewBox="0 0 13 16"><defs><linearGradient id="fi6" x1="0" y1="0" x2="0" y2="1"><stop offset="0" stop-color="#2458a8"/><stop offset="1" stop-color="#3aa6ea"/></linearGradient></defs><path d="M0.5 0.5 L8.5 0.5 L11.5 3.5 L11.5 15.5 L0.5 15.5 Z" fill="#fdfdfd" stroke="#7a7a7a" stroke-width="1"/><path d="M8.5 0.5 L8.5 3.5 L11.5 3.5" fill="none" stroke="#7a7a7a" stroke-width="0.9"/><rect x="3" y="5" width="6" height="6" fill="url(#fi6)"/></svg><div style="position:absolute;top:355px;font-size:12px;line-height:12px;color:#000;white-space:nowrap;letter-spacing:-0.520px;left:639px;">img_1848x2768x24_01829.jpg</div><div style="position:absolute;left:902px;top:356px;width:9px;height:9px;background:#1aa84a;border-radius:50%"></div><div style="position:absolute;top:355px;font-size:12px;line-height:12px;color:#000;white-space:nowrap;letter-spacing:-0.350px;right:208px;">1,113,446</div><div style="position:absolute;left:601px;top:374px;width:13px;height:13px;border:1px solid #1a1a1a;box-sizing:border-box;background:#fff"></div><svg style="position:absolute;left:622px;top:372px;" width="13" height="16" viewBox="0 0 13 16"><defs><linearGradient id="fi7" x1="0" y1="0" x2="0" y2="1"><stop offset="0" stop-color="#2458a8"/><stop offset="1" stop-color="#3aa6ea"/></linearGradient></defs><path d="M0.5 0.5 L8.5 0.5 L11.5 3.5 L11.5 15.5 L0.5 15.5 Z" fill="#fdfdfd" stroke="#7a7a7a" stroke-width="1"/><path d="M8.5 0.5 L8.5 3.5 L11.5 3.5" fill="none" stroke="#7a7a7a" stroke-width="0.9"/><rect x="3" y="5" width="6" height="6" fill="url(#fi7)"/></svg><div style="position:absolute;top:375px;font-size:12px;line-height:12px;color:#000;white-space:nowrap;letter-spacing:-0.520px;left:639px;">img_1848x2768x24_01881.jpg</div><div style="position:absolute;left:902px;top:376px;width:9px;height:9px;background:#1aa84a;border-radius:50%"></div><div style="position:absolute;top:375px;font-size:12px;line-height:12px;color:#000;white-space:nowrap;letter-spacing:-0.350px;right:208px;">1,113,446</div><div style="position:absolute;left:601px;top:394px;width:13px;height:13px;border:1px solid #1a1a1a;box-sizing:border-box;background:#fff"></div><svg style="position:absolute;left:622px;top:392px;" width="13" height="16" viewBox="0 0 13 16"><defs><linearGradient id="fi8" x1="0" y1="0" x2="0" y2="1"><stop offset="0" stop-color="#2458a8"/><stop offset="1" stop-color="#3aa6ea"/></linearGradient></defs><path d="M0.5 0.5 L8.5 0.5 L11.5 3.5 L11.5 15.5 L0.5 15.5 Z" fill="#fdfdfd" stroke="#7a7a7a" stroke-width="1"/><path d="M8.5 0.5 L8.5 3.5 L11.5 3.5" fill="none" stroke="#7a7a7a" stroke-width="0.9"/><rect x="3" y="5" width="6" height="6" fill="url(#fi8)"/></svg><div style="position:absolute;top:395px;font-size:12px;line-height:12px;color:#000;white-space:nowrap;letter-spacing:-0.520px;left:639px;">img_2048x3072x24_00037.jpg</div><div style="position:absolute;left:902px;top:396px;width:9px;height:9px;background:#1aa84a;border-radius:50%"></div><div style="position:absolute;top:395px;font-size:12px;line-height:12px;color:#000;white-space:nowrap;letter-spacing:-0.350px;right:208px;">1,230,603</div><div style="position:absolute;left:601px;top:414px;width:13px;height:13px;border:1px solid #1a1a1a;box-sizing:border-box;background:#fff"></div><svg style="position:absolute;left:622px;top:412px;" width="13" height="16" viewBox="0 0 13 16"><defs><linearGradient id="fi9" x1="0" y1="0" x2="0" y2="1"><stop offset="0" stop-color="#2458a8"/><stop offset="1" stop-color="#3aa6ea"/></linearGradient></defs><path d="M0.5 0.5 L8.5 0.5 L11.5 3.5 L11.5 15.5 L0.5 15.5 Z" fill="#fdfdfd" stroke="#7a7a7a" stroke-width="1"/><path d="M8.5 0.5 L8.5 3.5 L11.5 3.5" fill="none" stroke="#7a7a7a" stroke-width="0.9"/><rect x="3" y="5" width="6" height="6" fill="url(#fi9)"/></svg><div style="position:absolute;top:415px;font-size:12px;line-height:12px;color:#000;white-space:nowrap;letter-spacing:-0.520px;left:639px;">img_2232x3766x24_00032.jpg</div><div style="position:absolute;left:902px;top:416px;width:9px;height:9px;background:#1aa84a;border-radius:50%"></div><div style="position:absolute;top:415px;font-size:12px;line-height:12px;color:#000;white-space:nowrap;letter-spacing:-0.350px;right:208px;">1,601,045</div><div style="position:absolute;left:601px;top:434px;width:13px;height:13px;border:1px solid #1a1a1a;box-sizing:border-box;background:#fff"></div><svg style="position:absolute;left:622px;top:432px;" width="13" height="16" viewBox="0 0 13 16"><defs><linearGradient id="fi10" x1="0" y1="0" x2="0" y2="1"><stop offset="0" stop-color="#2458a8"/><stop offset="1" stop-color="#3aa6ea"/></linearGradient></defs><path d="M0.5 0.5 L8.5 0.5 L11.5 3.5 L11.5 15.5 L0.5 15.5 Z" fill="#fdfdfd" stroke="#7a7a7a" stroke-width="1"/><path d="M8.5 0.5 L8.5 3.5 L11.5 3.5" fill="none" stroke="#7a7a7a" stroke-width="0.9"/><rect x="3" y="5" width="6" height="6" fill="url(#fi10)"/></svg><div style="position:absolute;top:435px;font-size:12px;line-height:12px;color:#000;white-space:nowrap;letter-spacing:-0.520px;left:639px;">img_2250x3150x24_00031.jpg</div><div style="position:absolute;left:902px;top:436px;width:9px;height:9px;background:#1aa84a;border-radius:50%"></div><div style="position:absolute;top:435px;font-size:12px;line-height:12px;color:#000;white-space:nowrap;letter-spacing:-0.350px;right:208px;">1,123,519</div><div style="position:absolute;left:601px;top:454px;width:13px;height:13px;border:1px solid #1a1a1a;box-sizing:border-box;background:#fff"></div><svg style="position:absolute;left:622px;top:452px;" width="13" height="16" viewBox="0 0 13 16"><defs><linearGradient id="fi11" x1="0" y1="0" x2="0" y2="1"><stop offset="0" stop-color="#2458a8"/><stop offset="1" stop-color="#3aa6ea"/></linearGradient></defs><path d="M0.5 0.5 L8.5 0.5 L11.5 3.5 L11.5 15.5 L0.5 15.5 Z" fill="#fdfdfd" stroke="#7a7a7a" stroke-width="1"/><path d="M8.5 0.5 L8.5 3.5 L11.5 3.5" fill="none" stroke="#7a7a7a" stroke-width="0.9"/><rect x="3" y="5" width="6" height="6" fill="url(#fi11)"/></svg><div style="position:absolute;top:455px;font-size:12px;line-height:12px;color:#000;white-space:nowrap;letter-spacing:-0.520px;left:639px;">img_2564x3846x24_00094.jpg</div><div style="position:absolute;left:902px;top:456px;width:9px;height:9px;background:#1aa84a;border-radius:50%"></div><div style="position:absolute;top:455px;font-size:12px;line-height:12px;color:#000;white-space:nowrap;letter-spacing:-0.350px;right:208px;">2,913,888</div><div style="position:absolute;left:601px;top:474px;width:13px;height:13px;border:1px solid #1a1a1a;box-sizing:border-box;background:#fff"></div><svg style="position:absolute;left:622px;top:472px;" width="13" height="16" viewBox="0 0 13 16"><defs><linearGradient id="fi12" x1="0" y1="0" x2="0" y2="1"><stop offset="0" stop-color="#2458a8"/><stop offset="1" stop-color="#3aa6ea"/></linearGradient></defs><path d="M0.5 0.5 L8.5 0.5 L11.5 3.5 L11.5 15.5 L0.5 15.5 Z" fill="#fdfdfd" stroke="#7a7a7a" stroke-width="1"/><path d="M8.5 0.5 L8.5 3.5 L11.5 3.5" fill="none" stroke="#7a7a7a" stroke-width="0.9"/><rect x="3" y="5" width="6" height="6" fill="url(#fi12)"/></svg><div style="position:absolute;top:475px;font-size:12px;line-height:12px;color:#000;white-space:nowrap;letter-spacing:-0.520px;left:639px;">img_2667x4000x24_01760.jpg</div><div style="position:absolute;left:902px;top:476px;width:9px;height:9px;background:#1aa84a;border-radius:50%"></div><div style="position:absolute;top:475px;font-size:12px;line-height:12px;color:#000;white-space:nowrap;letter-spacing:-0.350px;right:208px;">2,615,824</div><div style="position:absolute;left:601px;top:494px;width:13px;height:13px;border:1px solid #1a1a1a;box-sizing:border-box;background:#fff"></div><svg style="position:absolute;left:622px;top:492px;" width="13" height="16" viewBox="0 0 13 16"><defs><linearGradient id="fi13" x1="0" y1="0" x2="0" y2="1"><stop offset="0" stop-color="#2458a8"/><stop offset="1" stop-color="#3aa6ea"/></linearGradient></defs><path d="M0.5 0.5 L8.5 0.5 L11.5 3.5 L11.5 15.5 L0.5 15.5 Z" fill="#fdfdfd" stroke="#7a7a7a" stroke-width="1"/><path d="M8.5 0.5 L8.5 3.5 L11.5 3.5" fill="none" stroke="#7a7a7a" stroke-width="0.9"/><rect x="3" y="5" width="6" height="6" fill="url(#fi13)"/></svg><div style="position:absolute;top:495px;font-size:12px;line-height:12px;color:#000;white-space:nowrap;letter-spacing:-0.520px;left:639px;">img_2682x3578x24_00097.jpg</div><div style="position:absolute;left:902px;top:496px;width:9px;height:9px;background:#1aa84a;border-radius:50%"></div><div style="position:absolute;top:495px;font-size:12px;line-height:12px;color:#000;white-space:nowrap;letter-spacing:-0.350px;right:208px;">2,717,009</div><div style="position:absolute;left:601px;top:514px;width:13px;height:13px;border:1px solid #1a1a1a;box-sizing:border-box;background:#fff"></div><svg style="position:absolute;left:622px;top:512px;" width="13" height="16" viewBox="0 0 13 16"><defs><linearGradient id="fi14" x1="0" y1="0" x2="0" y2="1"><stop offset="0" stop-color="#2458a8"/><stop offset="1" stop-color="#3aa6ea"/></linearGradient></defs><path d="M0.5 0.5 L8.5 0.5 L11.5 3.5 L11.5 15.5 L0.5 15.5 Z" fill="#fdfdfd" stroke="#7a7a7a" stroke-width="1"/><path d="M8.5 0.5 L8.5 3.5 L11.5 3.5" fill="none" stroke="#7a7a7a" stroke-width="0.9"/><rect x="3" y="5" width="6" height="6" fill="url(#fi14)"/></svg><div style="position:absolute;top:515px;font-size:12px;line-height:12px;color:#000;white-space:nowrap;letter-spacing:-0.520px;left:639px;">img_2762x4143x24_00014.jpg</div><div style="position:absolute;left:902px;top:516px;width:9px;height:9px;background:#1aa84a;border-radius:50%"></div><div style="position:absolute;top:515px;font-size:12px;line-height:12px;color:#000;white-space:nowrap;letter-spacing:-0.350px;right:208px;">1,509,330</div><div style="position:absolute;top:530px;font-size:12px;line-height:12px;color:#000;white-space:nowrap;letter-spacing:-0.370px;left:122px;">Sorted by:</div><div style="position:absolute;left:184px;top:526px;width:107px;height:20px;background:#fff;border:1px solid #d6d6d6;border-radius:3px;box-sizing:border-box"></div><div style="position:absolute;top:530px;font-size:12px;line-height:12px;color:#000;white-space:nowrap;letter-spacing:-0.672px;left:187px;">Real</div><svg style="position:absolute;left:278px;top:533px;" width="9" height="5" viewBox="0 0 9 5"><path d="M0 0 L8 0 L4 4.5 Z" fill="#000"/></svg><div style="position:absolute;top:559px;font-size:12px;line-height:12px;color:#000;white-space:nowrap;letter-spacing:-1.010px;left:118px;">Log</div><svg style="position:absolute;left:1057px;top:559px;" width="9" height="8" viewBox="0 0 9 8"><path d="M0.6 0.6 L8.4 7.4 M8.4 0.6 L0.6 7.4" stroke="#000" stroke-width="1.4"/></svg><div style="position:absolute;left:214px;top:575px;width:1px;height:56px;background:#e2e2e2"></div><div style="position:absolute;left:314px;top:575px;width:1px;height:56px;background:#e2e2e2"></div><div style="position:absolute;left:414px;top:575px;width:1px;height:56px;background:#e2e2e2"></div><div style="position:absolute;top:581px;font-size:12px;line-height:12px;color:#000;white-space:nowrap;letter-spacing:-0.004px;left:153px;">Type</div><div style="position:absolute;top:581px;font-size:12px;line-height:12px;color:#000;white-space:nowrap;letter-spacing:-0.215px;left:253px;">Date</div><div style="position:absolute;top:581px;font-size:12px;line-height:12px;color:#000;white-space:nowrap;letter-spacing:-0.059px;left:352px;">Time</div><div style="position:absolute;top:581px;font-size:12px;line-height:12px;color:#000;white-space:nowrap;letter-spacing:-0.504px;left:733px;">Text</div><div style="position:absolute;left:115px;top:613px;width:955px;height:1px;background:#e2e2e2"></div><div style="position:absolute;left:115px;top:630px;width:955px;height:1px;background:#e2e2e2"></div><svg style="position:absolute;left:117px;top:597px;" width="18" height="16" viewBox="0 0 18 16"><circle cx="8.7" cy="7.6" r="7.3" fill="#f3f9ff" stroke="#4a7cb0" stroke-width="1"/><rect x="7.7" y="5.6" width="2.2" height="6" fill="#1d62a8"/><rect x="6.3" y="5.6" width="1.6" height="1.1" fill="#1d62a8"/><rect x="6.2" y="11" width="5.2" height="1.4" fill="#1d62a8"/><circle cx="8.8" cy="3.3" r="1.25" fill="#1d62a8"/></svg><div style="position:absolute;top:600px;font-size:12px;line-height:12px;color:#000;white-space:nowrap;letter-spacing:-0.253px;left:140px;">System</div><div style="position:absolute;top:600px;font-size:12px;line-height:12px;color:#000;white-space:nowrap;letter-spacing:-0.156px;left:218px;">10/16/2025</div><div style="position:absolute;top:600px;font-size:12px;line-height:12px;color:#000;white-space:nowrap;letter-spacing:-0.438px;left:318px;">9:26:17 PM</div><div style="position:absolute;top:600px;font-size:12px;line-height:12px;color:#000;white-space:nowrap;letter-spacing:-0.196px;left:418px;">Scan has been completed for Kingston DataTraveler 3.0 0000 in 6m 2s</div><svg style="position:absolute;left:117px;top:614px;" width="18" height="16" viewBox="0 0 18 16"><circle cx="8.7" cy="7.6" r="7.3" fill="#f3f9ff" stroke="#4a7cb0" stroke-width="1"/><rect x="7.7" y="5.6" width="2.2" height="6" fill="#1d62a8"/><rect x="6.3" y="5.6" width="1.6" height="1.1" fill="#1d62a8"/><rect x="6.2" y="11" width="5.2" height="1.4" fill="#1d62a8"/><circle cx="8.8" cy="3.3" r="1.25" fill="#1d62a8"/></svg><div style="position:absolute;top:617px;font-size:12px;line-height:12px;color:#000;white-space:nowrap;letter-spacing:-0.253px;left:140px;">System</div><div style="position:absolute;top:617px;font-size:12px;line-height:12px;color:#000;white-space:nowrap;letter-spacing:-0.156px;left:218px;">10/16/2025</div><div style="position:absolute;top:617px;font-size:12px;line-height:12px;color:#000;white-space:nowrap;letter-spacing:-0.438px;left:318px;">9:36:52 PM</div><div style="position:absolute;top:617px;font-size:12px;line-height:12px;color:#000;white-space:nowrap;letter-spacing:-0.130px;left:418px;">File enumeration for Raw Files was completed in 1s.</div><div style="position:absolute;top:683px;font-size:12px;line-height:12px;color:#000;white-space:nowrap;letter-spacing:-0.938px;left:120px;">Ready</div><div style="position:absolute;left:584px;top:678px;width:1px;height:21px;background:#d0d0d0"></div><div style="position:absolute;left:843px;top:678px;width:1px;height:21px;background:#d0d0d0"></div><div style="position:absolute;left:1054px;top:678px;width:1px;height:21px;background:#d0d0d0"></div><div style="position:absolute;top:683px;font-size:12px;line-height:12px;color:#000;white-space:nowrap;letter-spacing:-0.188px;left:592px;">Marked: 0 files and 0 folders. Total size: 0 Bytes</div><div style="position:absolute;top:683px;font-size:12px;line-height:12px;color:#000;white-space:nowrap;letter-spacing:-0.239px;left:851px;">Total 2.64 GB in 1932 files in 34 folders</div><svg style="position:absolute;left:138px;top:125px;" width="44" height="40" viewBox="0 0 44 40"><defs><linearGradient id="rg" x1="0" y1="0" x2="1" y2="0.3"><stop offset="0" stop-color="#1583c8"/><stop offset="1" stop-color="#4fb2ea"/></linearGradient></defs>
<path d="M9.25 24.3 A12.5 12.5 0 0 1 31.24 12.83" fill="none" stroke="url(#rg)" stroke-width="5"/>
<path d="M25.7 13.6 L37 6.3 L37 19.6 Z" fill="#44a8e4"/>
<rect x="9.3" y="26.6" width="5" height="5" transform="rotate(45 11.8 29.1)" fill="#1680c6"/>
<rect x="27.8" y="26.6" width="5" height="5" transform="rotate(45 30.3 29.1)" fill="#1680c6"/>
<ellipse cx="21" cy="33" rx="4.8" ry="1.8" fill="#1680c6"/></svg><svg style="position:absolute;left:215px;top:125px;" width="44" height="40" viewBox="0 0 44 40"><defs><linearGradient id="dg" x1="0" y1="0" x2="0.3" y2="1"><stop offset="0" stop-color="#f6f9fc"/><stop offset="1" stop-color="#d5e5f4"/></linearGradient></defs>
<path d="M8.5 7.5 L17.5 7.5 L17.5 9.5 L28 9.5 L28 11.5 L30.5 11.5 L30.5 22 L8.5 22 Z" fill="#f2d083" stroke="#8d6a32" stroke-width="1"/>
<path d="M9 9 L16 9 L16.5 12 L9 12 Z" fill="#e9b65a"/>
<path d="M9 12.5 L17 12.5 L17 11.5" fill="none" stroke="#8d6a32" stroke-width="0.9"/>
<path d="M20.5 14.5 L30.5 14.5 L35 19 L35 33.5 L20.5 33.5 Z" fill="url(#dg)" stroke="#4d6577" stroke-width="1"/>
<path d="M30.5 14.5 L30.5 19 L35 19" fill="#fff" stroke="#4d6577" stroke-width="1"/>
<circle cx="15.3" cy="26.6" r="7.6" fill="#fbfbfb" stroke="#b5c4cf" stroke-width="1"/>
<path d="M13.6 22.3 L17 22.3 L17 24.9 L19.6 24.9 L19.6 28.3 L17 28.3 L17 30.9 L13.6 30.9 L13.6 28.3 L11 28.3 L11 24.9 L13.6 24.9 Z" fill="#d93a3f"/></svg><svg style="position:absolute;left:287px;top:125px;" width="44" height="40" viewBox="0 0 44 40"><defs><linearGradient id="dgg" x1="0" y1="0" x2="0.3" y2="1"><stop offset="0" stop-color="#f8f8f8"/><stop offset="1" stop-color="#e6e6e6"/></linearGradient></defs>
<path d="M8.5 7.5 L17.5 7.5 L17.5 9.5 L28 9.5 L28 11.5 L30.5 11.5 L30.5 22 L8.5 22 Z" fill="#e4e4e4" stroke="#9a9a9a" stroke-width="1"/>
<path d="M9 9 L16 9 L16.5 12 L9 12 Z" fill="#d8d8d8"/>
<path d="M9 12.5 L17 12.5 L17 11.5" fill="none" stroke="#9a9a9a" stroke-width="0.9"/>
<path d="M20.5 14.5 L30.5 14.5 L35 19 L35 33.5 L20.5 33.5 Z" fill="url(#dgg)" stroke="#9a9a9a" stroke-width="1"/>
<path d="M30.5 14.5 L30.5 19 L35 19" fill="#fff" stroke="#9a9a9a" stroke-width="1"/>
<circle cx="15.3" cy="26.6" r="7.6" fill="#fbfbfb" stroke="#c8c8c8" stroke-width="1"/>
<path d="M13.6 22.3 L17 22.3 L17 24.9 L19.6 24.9 L19.6 28.3 L17 28.3 L17 30.9 L13.6 30.9 L13.6 28.3 L11 28.3 L11 24.9 L13.6 24.9 Z" fill="#8e8e8e"/><path d="M8 14 L12.5 18 L22 5" fill="none" stroke="#a8a8a8" stroke-width="2.6" opacity="0.85"/></svg><svg style="position:absolute;left:366px;top:125px;" width="44" height="40" viewBox="0 0 44 40"><defs><linearGradient id="bg366125" x1="0" y1="0" x2="0" y2="1"><stop offset="0" stop-color="#34404e"/><stop offset="0.4" stop-color="#cfd6de"/><stop offset="0.75" stop-color="#6a7684"/><stop offset="1" stop-color="#34404e"/></linearGradient>
<radialGradient id="lg366125" cx="0.5" cy="0.5" r="0.5"><stop offset="0" stop-color="#c8e8fd"/><stop offset="1" stop-color="#5eaeea"/></radialGradient></defs><g transform="translate(0 0)">
<g transform="translate(34 20) rotate(29)"><path d="M-15.5 -3 L0 -5.2 L0 5.2 L-15.5 3 Z" fill="url(#bg366125)"/><rect x="-16.5" y="-3.2" width="2.6" height="6.4" fill="#1f2833"/><ellipse cx="0" cy="0" rx="2.6" ry="5" fill="url(#lg366125)" stroke="#1f2833" stroke-width="1.5"/></g>
<g transform="translate(22 24.5) rotate(36)"><path d="M-17 -3.3 L0 -5.8 L0 5.8 L-17 3.3 Z" fill="url(#bg366125)"/><rect x="-18" y="-3.5" width="2.8" height="7" fill="#1f2833"/><ellipse cx="0" cy="0" rx="2.9" ry="5.7" fill="url(#lg366125)" stroke="#1f2833" stroke-width="1.6"/></g>
</g></svg><svg style="position:absolute;left:434px;top:125px;" width="44" height="40" viewBox="0 0 44 40"><defs><linearGradient id="bg434125" x1="0" y1="0" x2="0" y2="1"><stop offset="0" stop-color="#9a9a9a"/><stop offset="0.4" stop-color="#dedede"/><stop offset="0.75" stop-color="#b0b0b0"/><stop offset="1" stop-color="#9a9a9a"/></linearGradient>
<radialGradient id="lg434125" cx="0.5" cy="0.5" r="0.5"><stop offset="0" stop-color="#f2f2f2"/><stop offset="1" stop-color="#d0d0d0"/></radialGradient></defs><g transform="translate(0 5)">
<g transform="translate(34 20) rotate(29)"><path d="M-15.5 -3 L0 -5.2 L0 5.2 L-15.5 3 Z" fill="url(#bg434125)"/><rect x="-16.5" y="-3.2" width="2.6" height="6.4" fill="#8a8a8a"/><ellipse cx="0" cy="0" rx="2.6" ry="5" fill="url(#lg434125)" stroke="#8a8a8a" stroke-width="1.5"/></g>
<g transform="translate(22 24.5) rotate(36)"><path d="M-17 -3.3 L0 -5.8 L0 5.8 L-17 3.3 Z" fill="url(#bg434125)"/><rect x="-18" y="-3.5" width="2.8" height="7" fill="#8a8a8a"/><ellipse cx="0" cy="0" rx="2.9" ry="5.7" fill="url(#lg434125)" stroke="#8a8a8a" stroke-width="1.6"/></g>
</g><path d="M26 13.5 C26.5 4.5 15 4 11.5 9.5" fill="none" stroke="#8a8a8a" stroke-width="3.6"/><path d="M8 6 L8.5 15 L16.5 12 Z" fill="#8a8a8a"/></svg><svg style="position:absolute;left:502px;top:125px;" width="44" height="40" viewBox="0 0 44 40"><defs><linearGradient id="bg502125" x1="0" y1="0" x2="0" y2="1"><stop offset="0" stop-color="#9a9a9a"/><stop offset="0.4" stop-color="#dedede"/><stop offset="0.75" stop-color="#b0b0b0"/><stop offset="1" stop-color="#9a9a9a"/></linearGradient>
<radialGradient id="lg502125" cx="0.5" cy="0.5" r="0.5"><stop offset="0" stop-color="#f2f2f2"/><stop offset="1" stop-color="#d0d0d0"/></radialGradient></defs><g transform="translate(0 5)">
<g transform="translate(34 20) rotate(29)"><path d="M-15.5 -3 L0 -5.2 L0 5.2 L-15.5 3 Z" fill="url(#bg502125)"/><rect x="-16.5" y="-3.2" width="2.6" height="6.4" fill="#8a8a8a"/><ellipse cx="0" cy="0" rx="2.6" ry="5" fill="url(#lg502125)" stroke="#8a8a8a" stroke-width="1.5"/></g>
<g transform="translate(22 24.5) rotate(36)"><path d="M-17 -3.3 L0 -5.8 L0 5.8 L-17 3.3 Z" fill="url(#bg502125)"/><rect x="-18" y="-3.5" width="2.8" height="7" fill="#8a8a8a"/><ellipse cx="0" cy="0" rx="2.9" ry="5.7" fill="url(#lg502125)" stroke="#8a8a8a" stroke-width="1.6"/></g>
</g><path d="M10.5 13.5 C10 4.5 21.5 4 25 9.5" fill="none" stroke="#8a8a8a" stroke-width="3.6"/><path d="M28.5 6 L28 15 L20 12 Z" fill="#8a8a8a"/></svg><svg style="position:absolute;left:560px;top:125px;" width="44" height="40" viewBox="0 0 44 40"><defs><linearGradient id="mg" x1="0" y1="0" x2="0.4" y2="1"><stop offset="0" stop-color="#f6fbff"/><stop offset="1" stop-color="#d3e8f8"/></linearGradient>
<linearGradient id="mk" x1="0" y1="0" x2="1" y2="1"><stop offset="0" stop-color="#f1d62a"/><stop offset="1" stop-color="#d9b517"/></linearGradient></defs>
<path d="M16.5 4.5 L31.5 4.5 L37.5 10.5 L37.5 34.5 L16.5 34.5 Z" fill="url(#mg)" stroke="#4d6880" stroke-width="1"/>
<path d="M31.5 4.5 L31.5 10.5 L37.5 10.5" fill="#fff" stroke="#4d6880" stroke-width="1"/>
<path d="M9 12.5 C12 7 19 4.5 23 5.5 C27 6.5 31 16 31.5 22 C32 28 28 30 24 29 C18 27.5 11 22 8.5 18.5 C7 16.5 7.5 14.5 9 12.5 Z" fill="url(#mk)" stroke="#8a7412" stroke-width="0.9"/>
<circle cx="23.5" cy="14.3" r="2.7" fill="#fffdf0" stroke="#8a7412" stroke-width="0.7"/>
<circle cx="16.5" cy="20.3" r="2.6" fill="#fffdf0" stroke="#8a7412" stroke-width="0.7"/><rect x="16.1" y="17.8" width="0.8" height="5" fill="#5a5030"/>
<ellipse cx="25.2" cy="23.5" rx="3.4" ry="1.7" transform="rotate(-35 25.2 23.5)" fill="#fffdf0" stroke="#8a7412" stroke-width="0.7"/></svg><svg style="position:absolute;left:614px;top:125px;" width="44" height="40" viewBox="0 0 44 40"><defs><linearGradient id="ug" x1="0" y1="0" x2="0" y2="1"><stop offset="0" stop-color="#fbc978"/><stop offset="1" stop-color="#fdd487"/></linearGradient></defs>
<path d="M6.5 7.5 L15.8 7.5 L17.5 9.5 L37.5 9.5 L37.5 31.5 L6.5 31.5 Z" fill="url(#ug)" stroke="#98702e" stroke-width="1"/>
<path d="M7 8 L15.5 8 L16.8 9.8 L15.5 11.5 L7 11.5 Z" fill="#f0b860"/>
<path d="M6.5 11.5 L15.5 11.5 L17.5 9.5" fill="none" stroke="#98702e" stroke-width="1"/>
<path d="M20 21 C20 25.5 24 26.5 31.5 22 C27 27.5 19.5 28.5 17.5 22 Z" fill="#2596cf" stroke="#1b6d9b" stroke-width="0.6"/>
<path d="M14.8 20.3 L19.7 14.8 L24 20.3 L21 20.3 L21.5 23 L17.8 23 L18.2 20.3 Z" fill="#3aaee0" stroke="#1b6d9b" stroke-width="0.6"/></svg><svg style="position:absolute;left:660px;top:125px;" width="55" height="40" viewBox="0 0 55 40">
<rect x="4.6" y="6.5" width="6.8" height="6.8" fill="#fff" stroke="#1d5c9c" stroke-width="0.9"/><rect x="7" y="8.9" width="2" height="2" fill="#3d9a3d"/>
<rect x="4.6" y="16.6" width="6.8" height="6.8" fill="#fff" stroke="#1d5c9c" stroke-width="0.9"/><rect x="7" y="19" width="2" height="2" fill="#9a4040"/>
<rect x="4.6" y="26.7" width="6.8" height="6.8" fill="#fff" stroke="#1d5c9c" stroke-width="0.9"/><rect x="7" y="29.1" width="2" height="2" fill="#1f4f6f"/>
<rect x="15" y="9.1" width="8" height="1.8" fill="#1a7ac8"/><rect x="27" y="9.1" width="5" height="1.8" fill="#1a7ac8"/>
<rect x="15" y="19.1" width="8" height="1.8" fill="#1a7ac8"/><rect x="27" y="19.1" width="5" height="1.8" fill="#1a7ac8"/>
<rect x="15" y="29.2" width="8" height="1.8" fill="#1a7ac8"/><rect x="27" y="29.2" width="5" height="1.8" fill="#1a7ac8"/>
<path d="M42.5 25 L50.3 25 L46.4 29.2 Z" fill="#111"/></svg><svg style="position:absolute;left:715px;top:125px;" width="44" height="40" viewBox="0 0 44 40"><defs><linearGradient id="pg" x1="0" y1="0" x2="0.3" y2="1"><stop offset="0" stop-color="#f3fafe"/><stop offset="1" stop-color="#cbe5f7"/></linearGradient>
<radialGradient id="ir" cx="0.45" cy="0.4" r="0.6"><stop offset="0" stop-color="#a8c4ee"/><stop offset="1" stop-color="#4f77bd"/></radialGradient></defs>
<path d="M15.5 5.5 L32.5 5.5 L36.5 9.5 L36.5 33.5 L15.5 33.5 Z" fill="url(#pg)" stroke="#4b6578" stroke-width="1"/>
<path d="M32.5 5.5 L32.5 11 L36.5 11" fill="#f6fbff" stroke="#4b6578" stroke-width="1"/>
<path d="M9 19.3 C13 13.5 27 13.5 31 19.3 C27 25 13 25 9 19.3 Z" fill="#ffffff" stroke="#e2d3b2" stroke-width="1"/>
<circle cx="20" cy="19.3" r="4.6" fill="url(#ir)"/><circle cx="20" cy="19.6" r="1.9" fill="#15233c"/><circle cx="21.6" cy="17.4" r="0.9" fill="#fff"/></svg><svg style="position:absolute;left:773px;top:125px;" width="44" height="40" viewBox="0 0 44 40">
<g fill="#404040">
<rect x="9" y="10" width="2.7" height="1.8"/><rect x="15" y="10" width="6" height="1.8"/><rect x="26.2" y="10" width="8.8" height="1.8"/>
<rect x="9" y="19" width="2.7" height="1.8"/><rect x="15" y="19" width="15.8" height="1.8"/>
<rect x="9" y="28.1" width="2.7" height="1.8"/><rect x="15" y="28.1" width="2.8" height="1.8"/><rect x="23.3" y="28.1" width="11.7" height="1.8"/>
</g>
<g fill="#7aa6de" stroke="#2d5d9c" stroke-width="0.9">
<rect x="22.4" y="7.6" width="2.4" height="6.8"/><rect x="32.4" y="16.6" width="2.4" height="6.8"/><rect x="19.4" y="25.6" width="2.4" height="6.8"/>
</g></svg><svg style="position:absolute;left:116px;top:74px;" width="26" height="22" viewBox="0 0 26 22"><defs><linearGradient id="hd" x1="0" y1="0" x2="0" y2="1"><stop offset="0" stop-color="#ffffff"/><stop offset="0.6" stop-color="#dfe6ec"/><stop offset="1" stop-color="#8a96a2"/></linearGradient></defs>
<path d="M16.5 5.2 C11 3 6.2 6.5 6.3 11.3 C6.4 14.2 8 16 10.2 16.8" fill="none" stroke="#24a02c" stroke-width="3.4"/>
<path d="M16.5 5.2 C13 4 9.5 5 7.8 7.5" fill="none" stroke="#137a1c" stroke-width="2"/>
<path d="M9.5 10 L18.5 8 L21.2 10.8 L21.2 15 L11.5 17.3 L9.5 14.8 Z" fill="url(#hd)" stroke="#6f7a86" stroke-width="0.6"/>
<path d="M11 8.8 L17.2 6 L20.5 9 L12 11 Z" fill="#1c3fb0"/>
<path d="M12 13.5 L20 11.7" stroke="#9aa6b0" stroke-width="0.8"/></svg><svg style="position:absolute;left:118px;top:182px;" width="26" height="22" viewBox="0 0 26 22">
<rect x="11.5" y="7.5" width="11" height="11" fill="#dedede" stroke="#6f6f6f" stroke-width="1"/>
<rect x="12" y="14.8" width="10" height="3.2" fill="#ececec" stroke="#6f6f6f" stroke-width="0.8"/>
<circle cx="12.5" cy="8.8" r="5.4" fill="#eef3f8" stroke="#a9b3bc" stroke-width="0.9"/>
<rect x="12.2" y="5.2" width="1.7" height="1.7" fill="#3a4a5a"/><rect x="12.2" y="7.9" width="1.7" height="4.9" fill="#3a4a5a"/></svg><svg style="position:absolute;left:224px;top:184px;" width="20" height="20" viewBox="0 0 20 20">
<path d="M2 5.6 L9.5 3.3 L17.5 5.4 L17.5 8.6 L9.5 10.2 L2 8.6 Z" fill="#e6f6ff" stroke="#6a9fd2" stroke-width="1"/>
<text x="1.8" y="17.3" font-family="Liberation Sans" font-size="8" fill="#383838">Raw</text></svg><div style="position:absolute;left:1066px;top:690px;width:2px;height:2px;background:#b4b4b4"></div><div style="position:absolute;left:1063px;top:693px;width:2px;height:2px;background:#b4b4b4"></div><div style="position:absolute;left:1066px;top:693px;width:2px;height:2px;background:#b4b4b4"></div><div style="position:absolute;left:1060px;top:696px;width:2px;height:2px;background:#b4b4b4"></div><div style="position:absolute;left:1063px;top:696px;width:2px;height:2px;background:#b4b4b4"></div><div style="position:absolute;left:1066px;top:696px;width:2px;height:2px;background:#b4b4b4"></div>
</body></html>
